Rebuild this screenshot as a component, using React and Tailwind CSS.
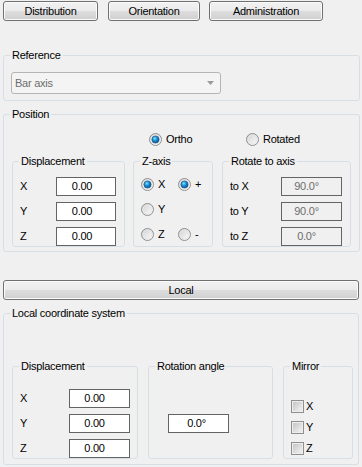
import React from "react";

function Btn({ className = "", children }) {
  return (
    <button
      className={
        "h-[20px] rounded-[3px] border border-[#707070] bg-[linear-gradient(#f2f2f2_0%,#ebebeb_48%,#dddddd_52%,#cfcfcf_100%)] shadow-[inset_0_0_0_1px_#fbfbfb] text-[11px] leading-[18px] text-black " +
        className
      }
    >
      {children}
    </button>
  );
}

function Group({ label, className = "", children, inner = "" }) {
  return (
    <fieldset className={"rounded-[3px] border border-[#d5dfe5] p-0 m-0 min-w-0 " + className}>
      <legend className="ml-[6px] px-[2px] leading-[13px] text-black">{label}</legend>
      <div className={inner}>{children}</div>
    </fieldset>
  );
}

function Radio({ checked }) {
  return (
    <svg width="13" height="13" viewBox="0 0 13 13" className="shrink-0">
      <defs>
        <linearGradient id="rgOff" x1="0" y1="0" x2="1" y2="1">
          <stop offset="0" stopColor="#cfcfcf" />
          <stop offset="1" stopColor="#ffffff" />
        </linearGradient>
        <radialGradient id="rgBlue" cx="0.4" cy="0.35" r="0.7">
          <stop offset="0" stopColor="#8fe0ff" />
          <stop offset="0.45" stopColor="#1a8fd6" />
          <stop offset="1" stopColor="#0a4e86" />
        </radialGradient>
      </defs>
      <circle cx="6.5" cy="6.5" r="6" fill="url(#rgOff)" stroke="#8e8f8f" strokeWidth="1" />
      <circle cx="6.5" cy="6.5" r="4.5" fill="none" stroke="#e6e6e6" strokeWidth="1" />
      {checked && <circle cx="6.5" cy="6.5" r="3.6" fill="url(#rgBlue)" stroke="#0d4f7f" strokeWidth="0.6" />}
    </svg>
  );
}

function Check() {
  return (
    <svg width="13" height="13" viewBox="0 0 13 13" className="shrink-0">
      <defs>
        <linearGradient id="cbg" x1="0" y1="0" x2="1" y2="1">
          <stop offset="0" stopColor="#c4c4c4" />
          <stop offset="1" stopColor="#f4f4f4" />
        </linearGradient>
      </defs>
      <rect x="0.5" y="0.5" width="12" height="12" fill="#f4f4f4" stroke="#8e8f8f" />
      <rect x="2" y="2" width="9" height="9" fill="url(#cbg)" stroke="#d8d8d8" strokeWidth="0.5" />
    </svg>
  );
}

function Field({ value, disabled, className = "" }) {
  return (
    <div
      className={
        "h-[19px] border border-[#646464] flex items-center justify-center leading-[17px] " +
        (disabled ? "bg-[#f0f0f0] text-[#6d6d6d] " : "bg-white text-black ") +
        className
      }
    >
      {value}
    </div>
  );
}

function Row({ label, value, disabled, w = "w-[60px]", pr = "pr-[8px]" }) {
  return (
    <div className="flex h-[19px] items-center justify-between">
      <span>{label}</span>
      <Field value={value} disabled={disabled} className={w + " " + pr} />
    </div>
  );
}

export default function App() {
  return (
    <div className="w-[362px] h-[467px] overflow-hidden bg-[#f0f0f0] font-['Liberation_Sans',Arial,sans-serif] text-[11px] tracking-[-0.25px] text-black">
      <div className="flex pt-[1px] pl-[3px]">
        <Btn className="w-[95px]">Distribution</Btn>
        <Btn className="ml-[10px] w-[92px]">Orientation</Btn>
        <Btn className="ml-[9px] w-[114px]">Administration</Btn>
      </div>

      <Group label="Reference" className="mt-[28px] ml-[3px] w-[357px]" inner="pt-[10px] pl-[7px] pb-[6px]">
        <div className="flex h-[22px] w-[210px] items-center justify-between rounded-[3px] border border-[#b5b5b5] bg-[#f4f4f4] pl-[3px] pr-[6px] text-[#6d6d6d]">
          <span>Bar axis</span>
          <svg width="7" height="4" viewBox="0 0 7 4">
            <path d="M0 0 H7 L3.5 4 Z" fill="#9a9a9a" />
          </svg>
        </div>
      </Group>

      <Group label="Position" className="mt-[7px] ml-[3px] w-[357px]" inner="pt-[12px] pl-[8px] pb-[4px]">
        <div className="flex h-[13px] items-center">
          <div className="ml-[137px] flex w-[97px] items-center gap-[4px]">
            <Radio checked />
            <span>Ortho</span>
          </div>
          <div className="flex items-center gap-[4px]">
            <Radio />
            <span>Rotated</span>
          </div>
        </div>
        <div className="mt-[9px] flex">
          <Group label="Displacement" className="w-[113px]" inner="pt-[9px] pl-[7px] pr-[8px] flex flex-col gap-[6px]">
            <Row label="X" value="0.00" />
            <Row label="Y" value="0.00" />
            <Row label="Z" value="0.00" />
          </Group>
          <Group label="Z-axis" className="ml-[8px] w-[80px]" inner="pt-[7px] pl-[7px] flex flex-col gap-[6px]">
            <div className="flex h-[19px] items-center">
              <div className="flex w-[37px] items-center gap-[4px]"><Radio checked /><span>X</span></div>
              <div className="flex items-center gap-[4px]"><Radio checked /><span>+</span></div>
            </div>
            <div className="flex h-[19px] items-center">
              <div className="flex w-[37px] items-center gap-[4px]"><Radio /><span>Y</span></div>
            </div>
            <div className="flex h-[19px] items-center">
              <div className="flex w-[37px] items-center gap-[4px]"><Radio /><span>Z</span></div>
              <div className="flex items-center gap-[4px]"><Radio /><span>-</span></div>
            </div>
          </Group>
          <Group label="Rotate to axis" className="ml-[9px] w-[129px]" inner="pt-[9px] pl-[7px] pr-[8px] flex flex-col gap-[6px]">
            <Row label="to X" value="90.0°" disabled w="w-[61px]" pr="pr-[10px]" />
            <Row label="to Y" value="90.0°" disabled w="w-[61px]" pr="pr-[10px]" />
            <Row label="to Z" value="0.0°" disabled w="w-[61px]" pr="pr-[10px]" />
          </Group>
        </div>
      </Group>

      <div className="mt-[28px] ml-[3px] flex">
        <Btn className="w-[356px]">Local</Btn>
      </div>

      <Group label="Local coordinate system" className="mt-[7px] ml-[3px] w-[356px]" inner="pt-[40px] pl-[8px] pb-[5px] flex">
        <Group label="Displacement" className="w-[126px]" inner="pt-[16px] pl-[7px] pr-[7px] flex flex-col gap-[6px]">
          <Row label="X" value="0.00" w="w-[61px]" pr="pr-[10px]" />
          <Row label="Y" value="0.00" w="w-[61px]" pr="pr-[10px]" />
          <Row label="Z" value="0.00" w="w-[61px]" pr="pr-[10px]" />
        </Group>
        <Group label="Rotation angle" className="ml-[10px] w-[125px]" inner="pt-[41px] pl-[19px]">
          <Field value="0.0°" className="w-[61px] pr-[4px]" />
        </Group>
        <Group label="Mirror" className="ml-[10px] w-[70px]" inner="pt-[27px] pl-[7px] flex flex-col gap-[8px]">
          <div className="flex h-[13px] items-center gap-[2px]"><Check /><span>X</span></div>
          <div className="flex h-[13px] items-center gap-[2px]"><Check /><span>Y</span></div>
          <div className="flex h-[13px] items-center gap-[2px]"><Check /><span>Z</span></div>
        </Group>
      </Group>
    </div>
  );
}
